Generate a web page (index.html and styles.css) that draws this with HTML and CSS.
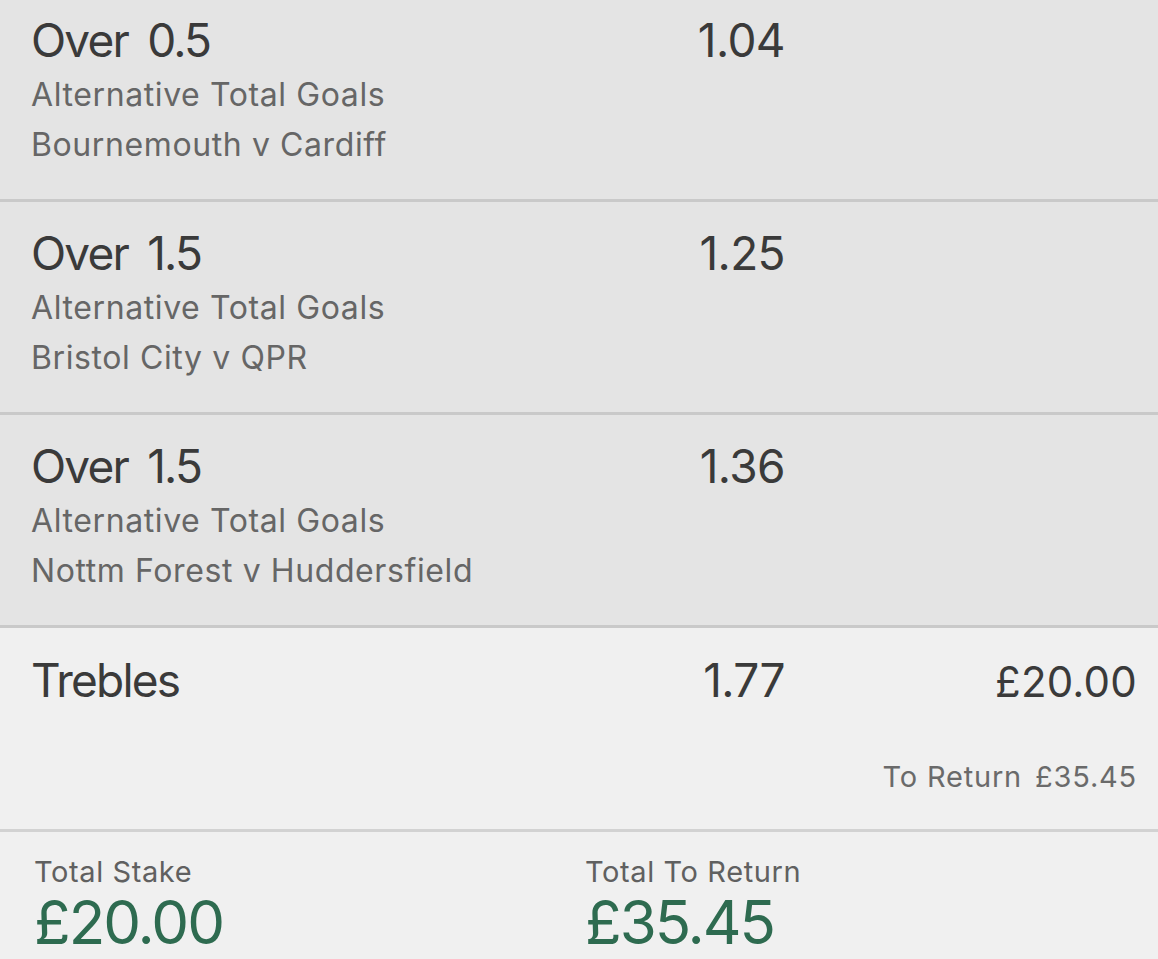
FILE: index.html
```html
<!DOCTYPE html>
<html lang="en">
<head>
<meta charset="utf-8">
<title>Bet Slip</title>
<link rel="stylesheet" href="styles.css">
</head>
<body>
<div class="slip">
  <section class="selections">
    <div class="sel">
      <div class="sel-info">
        <div class="sel-name">Over 0.5</div>
        <div class="sel-market">Alternative Total Goals</div>
        <div class="sel-event">Bournemouth v Cardiff</div>
      </div>
      <div class="odds">1.04</div>
    </div>
    <div class="sel">
      <div class="sel-info">
        <div class="sel-name">Over 1.5</div>
        <div class="sel-market">Alternative Total Goals</div>
        <div class="sel-event">Bristol City v QPR</div>
      </div>
      <div class="odds">1.25</div>
    </div>
    <div class="sel">
      <div class="sel-info">
        <div class="sel-name">Over 1.5</div>
        <div class="sel-market">Alternative Total Goals</div>
        <div class="sel-event">Nottm Forest v Huddersfield</div>
      </div>
      <div class="odds">1.36</div>
    </div>
  </section>
  <section class="bet">
    <div class="bet-row">
      <div class="bet-type">Trebles</div>
      <div class="odds">1.77</div>
      <div class="stake">£20.00</div>
    </div>
    <div class="bet-return">To Return <span class="amt">£35.45</span></div>
  </section>
  <section class="totals">
    <div class="total">
      <div class="total-label">Total Stake</div>
      <div class="total-value">£20.00</div>
    </div>
    <div class="total">
      <div class="total-label">Total To Return</div>
      <div class="total-value">£35.45</div>
    </div>
  </section>
</div>
</body>
</html>
```
FILE: styles.css
```css
html, body {
  margin: 0;
  padding: 0;
  background: #f0f0f0;
}
body {
  font-family: Inter, "Noto Sans", sans-serif;
  color: #3a3a3a;
  overflow: hidden;
}
.slip {
  margin-top: -11px;
}
.selections {
  background: #e4e4e4;
}
.sel {
  display: grid;
  grid-template-columns: 1fr auto 352px;
  padding: 23px 21px 29px 31px;
  border-bottom: 3px solid #c9c9c9;
}
.sel-name,
.bet-type,
.odds {
  font-size: 46px;
  line-height: 56px;
  color: #3a3a3a;
}
.sel-name {
  letter-spacing: -1.8px;
  word-spacing: 8px;
}
.bet-type {
  letter-spacing: -1.8px;
}
.odds {
  letter-spacing: -0.6px;
  text-align: right;
}
.sel-market,
.sel-event {
  font-size: 32px;
  line-height: 50px;
  color: #666666;
  letter-spacing: 0.6px;
}
.sel-market {
  margin-top: 2px;
}
.bet {
  padding: 24px 21px 32px 31px;
  border-bottom: 3px solid #d2d2d2;
}
.bet-row {
  display: grid;
  grid-template-columns: 1fr auto 352px;
  align-items: baseline;
}
.stake {
  font-size: 42px;
  line-height: 56px;
  text-align: right;
  color: #3a3a3a;
  letter-spacing: 0.2px;
}
.bet-return {
  margin-top: 47px;
  font-size: 29px;
  line-height: 40px;
  text-align: right;
  color: #6a6a6a;
  letter-spacing: 0.8px;
}
.bet-return .amt {
  margin-left: 4px;
}
.totals {
  display: grid;
  grid-template-columns: 551px 1fr;
  padding: 20px 21px 10px 34px;
}
.total-label {
  font-size: 29px;
  line-height: 40px;
  color: #606060;
  letter-spacing: 0.6px;
}
.total-value {
  font-size: 60px;
  line-height: 60px;
  color: #2e6b50;
  letter-spacing: -2px;
}
```
